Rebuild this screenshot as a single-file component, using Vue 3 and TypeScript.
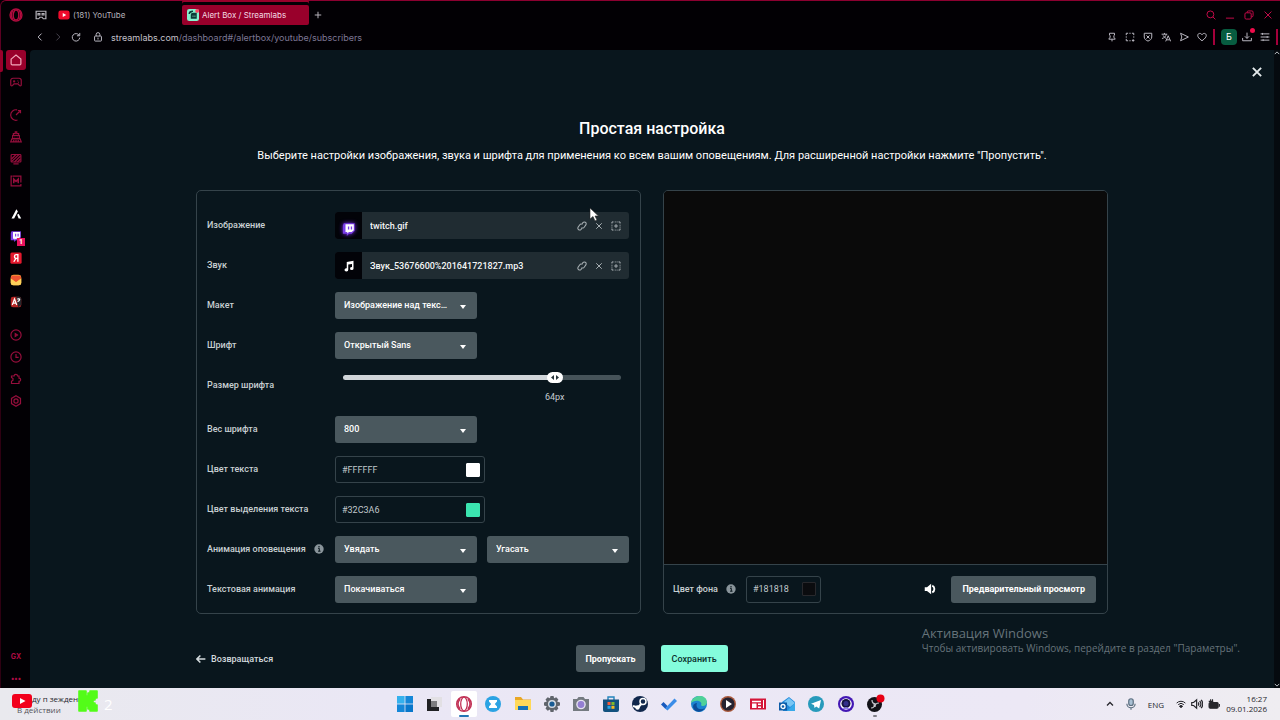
<script setup lang="ts">
import { computed, ref } from 'vue'

interface SideItem { icon: string; label: string; active?: boolean; badge?: string }
interface FileRow { id: string; label: string; name: string; icon: string }

const icons: Record<string, string> = {
  opera: '<ellipse cx="8" cy="8" rx="6.8" ry="6.8"/><ellipse cx="8" cy="8" rx="3.2" ry="5.6"/><path d="M4 3.4C2.6 6 2.6 10 4 12.6M12 3.4c1.400 2.600 1.400 6.600 0 9.200"/>',
  cards: '<path d="M1.500 3h13v10h-3.500l-1.500-2h-3L5 13H1.500z"/><path d="M4 6h2.500v2H4zM9.500 6H12v2H9.500z"/>',
  play: '<rect x="0.500" y="2" width="15" height="12" rx="3" fill="#f00b2c" stroke="none"/><path d="M6.300 5.200v5.600L11 8z" fill="#fff" stroke="none"/>',
  streamlabs: '<rect width="16" height="16" rx="3" fill="#85f3cf" stroke="none"/><path d="M3 6.500C3 4 5 3 8 3M6 8c0-1.500 1-2 2.500-2H12v6H6z" fill="#0c3b38" stroke="#0c3b38" stroke-width="2"/><circle cx="13.500" cy="2.500" r="2.500" fill="#ff4161" stroke="none"/><path d="M8 9v1M10.500 9v1" stroke="#85f3cf"/>',
  plus: '<path d="M8 1.500v13M1.500 8h13"/>',
  back: '<path d="M10.500 2.500L5 8l5.500 5.500"/>',
  forward: '<path d="M5.500 2.500L11 8l-5.500 5.500"/>',
  reload: '<path d="M13 5.200A6 6 0 1 0 14 9M14 1.500v4.500H9.500"/>',
  lock: '<rect x="2.500" y="6.500" width="11" height="8" rx="1"/><path d="M5 6.500V4a3 3 0 0 1 6 0v2.500M8 9v3"/>',
  search: '<circle cx="7" cy="7" r="5.500"/><path d="M11 11l4 4"/>',
  minimize: '<path d="M1.500 13h13"/>',
  restore: '<rect x="1.500" y="4.500" width="10" height="10" rx="2"/><path d="M5 4.500V3.500a2 2 0 0 1 2-2h5.500a2 2 0 0 1 2 2V9a2 2 0 0 1-2 2h-1"/>',
  close: '<path d="M2.500 2.500l11 11M13.500 2.500l-11 11"/>',
  pin: '<path d="M4 2h8v3l-1 1v3l2 1.500v1H3v-1L5 9V6L4 5zM8 11.500V15"/>',
  snapshot: '<path d="M2 5V2h3M7 2h2M11 2h3v3M14 7v2M2 7v2M2 11v3h3M7 14h2M11 13.500h4M13 11.500v4"/>',
  shield: '<path d="M2 2h12v6c0 3.500-3 5.500-6 6.500C5 13.500 2 11.500 2 8zM5.500 5.500l5 5M10.500 5.500l-5 5"/>',
  translate: '<path d="M1 3.500h9M5.500 1.500v2M8.500 3.500C8 7 5 9.500 1.500 10.500M3.500 5.500C4.500 8 6 9 8 10M7.500 15L11.500 6l4 9M9 12.500h5"/>',
  send: '<path d="M2.500 2L15 8 2.500 14l2-6z"/>',
  heart: '<path d="M8 14C3 10.500 1.200 8 1.200 5.500 1.200 1.800 6 1 8 4.300 10 1 14.800 1.800 14.800 5.500 14.800 8 13 10.500 8 14z"/>',
  download: '<path d="M8 1v9M4.500 6.800L8 10.300l3.500-3.500M1 9.500V14h14V9.500"/>',
  sliders: '<path d="M1 3h14M1 8h14M1 13h14M4 1.500v3M11.500 6.500v3M5 11.500v3"/>',
  home: '<path d="M1.500 6.800L8 1.500l6.500 5.300V13a1.500 1.500 0 0 1-1.500 1.500H3A1.500 1.500 0 0 1 1.500 13z"/>',
  gamepad: '<path d="M4 3h8a3 3 0 0 1 3 3v5.500c0 1.800-1.500 2-2.500 1l-1.800-2H5.300l-1.800 2c-1 1-2.500.8-2.500-1V6a3 3 0 0 1 3-3zM4 7h3M5.500 5.500v3M10 6.500h1M11 8.500h1"/>',
  gauge: '<path d="M9.500 1.200A7 7 0 1 0 10 14.700M8 8l5-5M10.500 2h3.500v3.500"/>',
  cleaner: '<path d="M4.500 6V3.500H7V1h2v2.500h2.500V6M3.500 6h9v4h-9zM2.500 10.500h11l1.500 4H1zM5 12v2M8 12v2M11 12v2M6 8h1M9 8h1"/>',
  monitor: '<rect x="1.500" y="2" width="13" height="10" rx="1"/><path d="M2 8l6-6M2 11.500L12 2M6 12l8-8M10 12l4-4M4.500 14.500h7"/>',
  mods: '<path d="M4 1.500h10.500V10M14.500 12v2.500H1.500v-13h2"/><path d="M5 11V5.500l3 3 3-3V11" stroke-width="2"/>',
  aria: '<path d="M2 14L8.500 1.500l2 3L5.500 14zM9.500 9l2-1.500L15 14h-3.500z" fill="#fff" stroke="none"/>',
  twitch: '<path d="M2 1.500h12.500v8.500l-3.500 3.500H8L5.500 16v-2.500H1V4z" fill="#7a3ee8" stroke="none"/><path d="M4 2.500h9.500v6.800L11 11.500H8L6 13v-1.500H4z" fill="#fff" stroke="none"/><path d="M7.500 5v3.500M10.800 5v3.500" stroke="#7a3ee8" stroke-width="1.500"/>',
  yandex: '<rect x="0.500" y="0.500" width="15" height="15" rx="2" fill="#e3182d" stroke="none"/><path d="M10.500 13V3.500H8.300C5.200 3.500 5.200 8.500 8.300 8.500h2.200M8 8.500L5 13" stroke="#fff" stroke-width="1.800"/>',
  mail: '<rect x="1" y="1" width="14" height="14" rx="4" fill="#ffb938" stroke="none"/><path d="M2 2h12l1 4-7 5-7-5z" fill="#ee5432" stroke="none"/><path d="M1 6l7 5 7-5v6a3 3 0 0 1-3 3H4a3 3 0 0 1-3-3z" fill="#ffd05a" stroke="none"/>',
  lingo: '<rect x="1" y="1" width="14" height="14" rx="3" fill="#b52524" stroke="none"/><path d="M8 1h4a3 3 0 0 1 3 3v8l-4 3z" fill="#28282d" stroke="none"/><path d="M3 12L6 4l3 8M4 9.500h4M9.500 4h4M11.500 3v1M13 4c0 2-1.500 3-3 3.500" stroke="#fff"/>',
  player: '<circle cx="8" cy="8" r="6.800"/><path d="M7 6v4l3-2z" fill="currentColor"/>',
  clock: '<circle cx="8" cy="8" r="6.800"/><path d="M8 4v4.500h3.500"/>',
  puzzle: '<path d="M2 4h3.500a2.300 2.300 0 0 1 4.600 0H12v2.800a2.200 2.200 0 0 1 0 4.400V14H2v-3l2-1.500v-2L2 6z"/>',
  gear: '<path d="M8 1l6 3.500v7L8 15l-6-3.500v-7z"/><circle cx="8" cy="8" r="2.800"/>',
  link: '<path d="M7 11.500l-1.500 1.500a3 3 0 0 1-4.200-4.200L5 5.200a3 3 0 0 1 4.300.3M9 4.500L10.500 3a3 3 0 0 1 4.200 4.200L11 10.800a3 3 0 0 1-4.300-.3" transform="rotate(-12 8 8)"/>',
  library: '<path d="M1.500 4V1.500H4M6 1.500h1.500M9 1.500h1.500M12 1.500h2.500V4M14.500 6v1.500M14.500 9v1.500M14.500 12v2.500H12M10.500 14.500H9M7.500 14.500H6M4 14.500H1.500V12M1.500 10.500V9M1.500 7.500V6M8 5v6M5 8h6"/>',
  music: '<path d="M5 2.500l9-1.500v10.500a2.300 2 0 1 1-2-2V5.200L7 6v7a2.500 2.200 0 1 1-2-2z" fill="#fff" stroke="none"/>',
  info: '<circle cx="8" cy="8" r="7.500" fill="currentColor" stroke="none"/><path d="M6.500 7H8.500v4.500M6.500 11.500h4" stroke="#0a171e" stroke-width="1.600"/><circle cx="8" cy="4.300" r="1.200" fill="#0a171e" stroke="none"/>',
  speaker: '<path d="M1 5.500h3L9.500 1v14L4 10.500H1z" fill="currentColor" stroke="none"/><path d="M11 3.500a5 5 0 0 1 0 9" stroke-width="2.500"/>',
  arrow: '<path d="M15 8H2M7 2.500L1.500 8 7 13.500" stroke-width="2.500"/>',
  up: '<path d="M2 11l6-6 6 6" stroke-width="2.500"/>',
  down: '<path d="M2 5l6 6 6-6" stroke-width="2.500"/>',
  mic: '<rect x="5" y="1" width="6" height="9" rx="3" fill="#a9c0d4"/><path d="M2.500 7.500a5.500 5.500 0 0 0 11 0M8 13v2.500"/>',
  wifi: '<path d="M1 6.500a10 10 0 0 1 14 0M3.500 9a6.500 6.500 0 0 1 9 0"/><path d="M5.500 11.500a3.500 3.500 0 0 1 5 0L8 14z" fill="currentColor"/>',
  volume: '<path d="M1 6h2.500L7.500 2.500v11L3.500 10H1zM9.500 6a3 3 0 0 1 0 4M11.500 4a6 6 0 0 1 0 8M13.500 2.500a8 8 0 0 1 0 11"/>',
  battery: '<rect x="1.500" y="6" width="12" height="7.500" rx="1.500" fill="currentColor"/><path d="M15.500 8v3.500M3.500 1.500v3M1 4.500h6M6 1.500v3" stroke-width="1.500"/>',
}

const taskIcons: { name: string; art: string }[] = [
  { name: 'Пуск', art: '<g fill="#1487d8"><path d="M0 0h7.600v7.600H0z" fill="#35b1ed"/><path d="M8.400 0H16v7.600H8.400z"/><path d="M0 8.400h7.600V16H0z"/><path d="M8.400 8.400H16V16H8.400z" fill="#0877cb"/></g>' },
  { name: 'Представление задач', art: '<path d="M5 1h11v10H5z" fill="#e2e0e4"/><path d="M1 3h4v8h8v4H1z" fill="#202124"/><path d="M5 5h6v6H5z" fill="#7d7d80"/>' },
  { name: 'Opera GX', art: '<g fill="none" stroke="#c23357"><circle cx="8" cy="8" r="7.300" stroke-width="1.500"/><ellipse cx="8" cy="8" rx="3.300" ry="6.800" stroke-width="1.300"/><path d="M4 3C1.500 6 1.500 10 4 13M12 3c2.500 3 2.500 7 0 10"/></g>' },
  { name: 'Zona', art: '<circle cx="8" cy="8" r="8" fill="#2ba3e3"/><path d="M4 4h8v1.500L9.800 8 12 10.500V12H4v-1.500L6.200 8 4 5.500z" fill="#fff"/>' },
  { name: 'Проводник', art: '<path d="M0 1h6l2 2.500h8V14H0z" fill="#e9a825"/><path d="M0 4h16v10H0z" fill="#ffd958"/><path d="M3 10h10v4H3z" fill="#1673b8"/>' },
  { name: 'Параметры', art: '<path d="M6.500 0h3l.6 2.200 2.100-1 2.200 2.300-1.300 2L16 6.500v3l-2.800.7 1.200 2.300-2.200 2.200-2.200-1.200L9.500 16h-3L6 13.500l-2.300 1.200-2.200-2.200 1.300-2.300L0 9.500v-3l2.800-1-1.300-2 2.200-2.300 2.200 1z" fill="#60656c"/><circle cx="8" cy="8" r="4" fill="#d6dce4"/><circle cx="8" cy="8" r="2.600" fill="#185b93"/>' },
  { name: 'Камера', art: '<path d="M0 3h4l1.500-2h5L12 3h4v12H0z" fill="#747a80"/><circle cx="8" cy="8.500" r="4.800" fill="#e5e2ef"/><circle cx="8" cy="8.500" r="3.400" fill="#947fd2"/>' },
  { name: 'Магазин', art: '<path d="M5 4V1h6v3" fill="none" stroke="#2384bc" stroke-width="1.400"/><path d="M0 3.500h16V14q0 2-2 2H2q-2 0-2-2z" fill="#12517e"/><path d="M4.500 6H7.600v3H4.500z" fill="#f15b39"/><path d="M8.400 6h3.100v3H8.400z" fill="#7db92a"/><path d="M4.500 9.800h3.100v3H4.500z" fill="#24a6e8"/><path d="M8.400 9.800h3.100v3H8.400z" fill="#f6bb20"/>' },
  { name: 'Steam', art: '<circle cx="8" cy="8" r="8" fill="#10274c"/><path d="M1 10l5 1.500L11 6" stroke="#fff" stroke-width="2.200" fill="none"/><circle cx="11" cy="5.500" r="3" fill="#10274c" stroke="#fff" stroke-width="1.500"/><circle cx="5.500" cy="11.500" r="2.200" fill="#fff"/>' },
  { name: 'To Do', art: '<path d="M0 8.500L2.500 6l4 4L4.500 13z" fill="#185abd"/><path d="M4 12.500L13.500 2.500 16 5 6.500 14.500z" fill="#3b8de8"/>' },
  { name: 'Edge', art: '<circle cx="8" cy="8" r="8" fill="#1b84d0"/><path d="M0 7C1-1 15-3 16 6c0 4-5 5-6 3 2-3-4-7-10-2z" fill="#4fd199"/><path d="M6 7c-2 5 3 8 8 5-3 5-11 5-12-1C2 8 4 7 6 7z" fill="#0b4c99"/>' },
  { name: 'Медиаплеер', art: '<circle cx="8" cy="8" r="8" fill="#a9583b"/><circle cx="8" cy="8" r="6.600" fill="#252331"/><path d="M6 4v8l6-4z" fill="#fff"/>' },
  { name: 'Новости', art: '<path d="M0 2.500h16v11H0z" fill="#d41638"/><path d="M2 4.800h9v1.500H2zM2 7.500h4.500V12H2zM8 7.500h3V9H8zM8 10.500h3V12H8zM13 4v8h1V4z" fill="#fff"/>' },
  { name: 'Outlook', art: '<path d="M3 6l7-5 6 5v9H4z" fill="#238bdc"/><path d="M5 6l5-4 6 5-5 4z" fill="#79c6f4"/><path d="M8 15l8-8v8z" fill="#38a9e9"/><path d="M0 6.500h8v8H0z" fill="#0d5ca8"/><circle cx="4" cy="10.500" r="2" stroke="#fff" stroke-width="1.300" fill="none"/>' },
  { name: 'Telegram', art: '<circle cx="8" cy="8" r="8" fill="#279abb"/><path d="M3 7.700L13 4l-1.800 8.500-3-2L6.500 12 6 9z" fill="#fff"/>' },
  { name: 'Алиса', art: '<circle cx="8" cy="8" r="8" fill="#4317b4"/><circle cx="8" cy="8" r="5.800" fill="#fff"/><circle cx="8" cy="7.500" r="4.500" fill="#171541"/><circle cx="8" cy="7.500" r="2.500" fill="#34308a"/><path d="M4.500 13q3.500-4 7 0z" fill="#8d7ce8"/>' },
  { name: 'OBS Studio', art: '<circle cx="7.500" cy="8.500" r="7.500" fill="#121217"/><g fill="none" stroke="#c7c6cd" stroke-width="1.200"><path d="M5 4q0 4 4 4M12 7q-4 0-4 4M4 12q4 0 3-4"/></g><circle cx="13.500" cy="2.500" r="4" fill="#e80014"/>' },
]

const sideGroups: SideItem[][] = [
  [{ icon: 'home', label: 'Главная', active: true }, { icon: 'gamepad', label: 'Игры' }],
  [
    { icon: 'gauge', label: 'GX Control' },
    { icon: 'cleaner', label: 'GX Cleaner' },
    { icon: 'monitor', label: 'Обои' },
    { icon: 'mods', label: 'Моды' },
  ],
  [
    { icon: 'aria', label: 'Aria' },
    { icon: 'twitch', label: 'Twitch', badge: '1' },
    { icon: 'yandex', label: 'Яндекс' },
    { icon: 'mail', label: 'Почта' },
    { icon: 'lingo', label: 'Переводчик' },
  ],
  [
    { icon: 'player', label: 'Плеер' },
    { icon: 'clock', label: 'История' },
    { icon: 'puzzle', label: 'Расширения' },
    { icon: 'gear', label: 'Настройки' },
  ],
]

const toolbar = ['pin', 'snapshot', 'shield', 'translate', 'send', 'heart']
const files: FileRow[] = [
  { id: 'image', label: 'Изображение', name: 'twitch.gif', icon: 'twitch' },
  { id: 'sound', label: 'Звук', name: 'Звук_53676600%201641721827.mp3', icon: 'music' },
]

const layout = ref('Изображение над текстом')
const font = ref('Открытый Sans')
const weight = ref('800')
const animIn = ref('Увядать')
const animOut = ref('Угасать')
const textAnim = ref('Покачиваться')
const textColor = ref('#FFFFFF')
const textSwatch = ref('#ffffff')
const accentColor = ref('#32C3A6')
const accentSwatch = ref('#3be5b0')
const backColor = ref('#181818')
const backSwatch = ref('#0b0c0f')

const minSize = 8
const maxSize = 80
const fontSize = ref(64)
const ratio = computed(() => (fontSize.value - minSize) / (maxSize - minSize))
const sliderVars = computed(() => ({ '--ratio': String(ratio.value) }))
</script>

<template>
  <div class="screen">
    <header class="browser">
      <div class="tabs">
        <button class="plain opera" aria-label="Меню Opera"><svg class="i14" viewBox="0 0 16 16" v-html="icons.opera" /></button>
        <button class="plain workspace" aria-label="Рабочее пространство"><svg class="i12" viewBox="0 0 16 16" v-html="icons.cards" /></button>
        <button class="tab"><svg class="i12" viewBox="0 0 16 16" v-html="icons.play" /><span>(181) YouTube</span></button>
        <button class="tab current"><svg class="i12" viewBox="0 0 16 16" v-html="icons.streamlabs" /><span>Alert Box / Streamlabs</span></button>
        <button class="plain newtab" aria-label="Новая вкладка"><svg class="i8" viewBox="0 0 16 16" v-html="icons.plus" /></button>
        <div class="window-buttons">
          <button v-for="n in ['search', 'minimize', 'restore', 'close']" :key="n" class="plain" :aria-label="n">
            <svg class="i10" viewBox="0 0 16 16" v-html="icons[n]" />
          </button>
        </div>
      </div>
      <nav class="address">
        <button class="plain" aria-label="Назад"><svg class="i10" viewBox="0 0 16 16" v-html="icons.back" /></button>
        <button class="plain dim" aria-label="Вперёд" disabled><svg class="i10" viewBox="0 0 16 16" v-html="icons.forward" /></button>
        <button class="plain" aria-label="Обновить"><svg class="i10" viewBox="0 0 16 16" v-html="icons.reload" /></button>
        <button class="plain lock" aria-label="Сведения о сайте"><svg class="i10" viewBox="0 0 16 16" v-html="icons.lock" /></button>
        <a class="url" href="#/alertbox/youtube/subscribers">streamlabs.com<span>/dashboard#/alertbox/youtube/subscribers</span></a>
        <div class="tools">
          <button v-for="n in toolbar" :key="n" class="plain" :aria-label="n"><svg class="i10" viewBox="0 0 16 16" v-html="icons[n]" /></button>
        </div>
        <i class="bar" />
        <button class="profile">Б</button>
        <button class="plain dl" aria-label="Загрузки"><svg class="i10" viewBox="0 0 16 16" v-html="icons.download" /></button>
        <button class="plain" aria-label="Настройки"><svg class="i10" viewBox="0 0 16 16" v-html="icons.sliders" /></button>
        <i class="bar" />
      </nav>
    </header>

    <div class="body">
      <aside class="side">
        <div v-for="(g, gi) in sideGroups" :key="gi" class="group">
          <button v-for="s in g" :key="s.icon" class="side-btn" :class="{ active: s.active }" :aria-label="s.label">
            <svg class="i12" viewBox="0 0 16 16" v-html="icons[s.icon]" />
            <b v-if="s.badge" class="badge">{{ s.badge }}</b>
          </button>
        </div>
        <div class="group end">
          <button class="side-btn gx">GX</button>
          <button class="side-btn gx" aria-label="Ещё">•••</button>
        </div>
      </aside>

      <main class="page">
        <button class="plain page-close" aria-label="Закрыть"><svg class="i12" viewBox="0 0 16 16" v-html="icons.close" /></button>
        <div class="wrap">
          <h1>Простая настройка</h1>
          <p class="lead">Выберите настройки изображения, звука и шрифта для применения ко всем вашим оповещениям. Для расширенной настройки нажмите "Пропустить".</p>

          <div class="panels">
            <form class="panel settings" @submit.prevent>
              <div v-for="f in files" :key="f.id" class="row">
                <label :for="f.id">{{ f.label }}</label>
                <div class="file">
                  <span class="thumb"><svg class="i14" :class="f.icon" viewBox="0 0 16 16" v-html="icons[f.icon]" /></span>
                  <input :id="f.id" class="file-name" type="text" readonly :value="f.name">
                  <button class="plain" aria-label="Ссылка"><svg class="i10" viewBox="0 0 16 16" v-html="icons.link" /></button>
                  <button class="plain" aria-label="Удалить"><svg class="i8" viewBox="0 0 16 16" v-html="icons.close" /></button>
                  <button class="plain" aria-label="Медиатека"><svg class="i10" viewBox="0 0 16 16" v-html="icons.library" /></button>
                </div>
              </div>
              <div class="row">
                <label for="layout">Макет</label>
                <div class="pair"><span class="select"><select id="layout" v-model="layout"><option>Изображение над текстом</option><option>Текст поверх изображения</option></select></span></div>
              </div>
              <div class="row">
                <label for="font">Шрифт</label>
                <div class="pair"><span class="select"><select id="font" v-model="font"><option>Открытый Sans</option><option>Roboto</option></select></span></div>
              </div>
              <div class="row">
                <label for="size">Размер шрифта</label>
                <div class="slider" :style="sliderVars">
                  <input id="size" v-model.number="fontSize" type="range" :min="minSize" :max="maxSize">
                  <output for="size">{{ fontSize }}px</output>
                </div>
              </div>
              <div class="row">
                <label for="weight">Вес шрифта</label>
                <div class="pair"><span class="select"><select id="weight" v-model="weight"><option>400</option><option>800</option></select></span></div>
              </div>
              <div class="row">
                <label for="tc">Цвет текста</label>
                <div class="color"><input id="tc" v-model="textColor" type="text"><input v-model="textSwatch" type="color" aria-label="Цвет текста"></div>
              </div>
              <div class="row">
                <label for="ac">Цвет выделения текста</label>
                <div class="color"><input id="ac" v-model="accentColor" type="text"><input v-model="accentSwatch" type="color" aria-label="Цвет выделения"></div>
              </div>
              <div class="row">
                <label for="ain">Анимация оповещения <svg class="i10 info" viewBox="0 0 16 16" v-html="icons.info" /></label>
                <div class="pair">
                  <span class="select"><select id="ain" v-model="animIn"><option>Увядать</option><option>Покачиваться</option></select></span>
                  <span class="select"><select v-model="animOut" aria-label="Анимация исчезновения"><option>Угасать</option><option>Увядать</option></select></span>
                </div>
              </div>
              <div class="row">
                <label for="ta">Текстовая анимация</label>
                <div class="pair"><span class="select"><select id="ta" v-model="textAnim"><option>Покачиваться</option><option>Увядать</option></select></span></div>
              </div>
            </form>

            <section class="panel preview">
              <div class="stage" />
              <div class="preview-bar">
                <label for="bg">Цвет фона <svg class="i10 info" viewBox="0 0 16 16" v-html="icons.info" /></label>
                <div class="color small"><input id="bg" v-model="backColor" type="text"><input v-model="backSwatch" type="color" aria-label="Цвет фона"></div>
                <button class="plain sound" aria-label="Звук"><svg class="i12" viewBox="0 0 16 16" v-html="icons.speaker" /></button>
                <button class="btn preview-btn">Предварительный просмотр</button>
              </div>
            </section>
          </div>

          <div class="actions">
            <button class="plain return"><svg class="i10" viewBox="0 0 16 16" v-html="icons.arrow" />Возвращаться</button>
            <div class="main-actions">
              <button class="btn">Пропускать</button>
              <button class="btn save">Сохранить</button>
            </div>
          </div>
        </div>
        <div class="watermark">
          <div class="wm-title">Активация Windows</div>
          <div class="wm-text">Чтобы активировать Windows, перейдите в раздел "Параметры".</div>
        </div>
      </main>
      <div class="scroll">
        <svg class="i6" viewBox="0 0 16 16" v-html="icons.up" />
        <svg class="i6" viewBox="0 0 16 16" v-html="icons.down" />
      </div>
    </div>

    <footer class="taskbar">
      <div class="widget">
        <svg class="yt" viewBox="0 0 20 16"><rect y="1" width="20" height="14" rx="3" fill="#f2001c" /><path d="M8 5v6l5.500-3z" fill="#fff" /></svg>
        <div class="widget-text"><span>ду п зеждени</span><span>В действии</span></div>
        <svg class="kick" viewBox="0 0 20 22"><path d="M1 1h7v5h2V3h2V1h7v7h-2v2h-2v3h2v2h2v6h-7v-2h-2v-3H8v5H1z" fill="#53fc18" stroke="#53fc18" stroke-linejoin="round" /></svg>
        <span class="count">2</span>
      </div>
      <div class="apps">
        <button v-for="(t, i) in taskIcons" :key="t.name" class="app" :class="{ open: i === 2, running: i === 16 }" :aria-label="t.name">
          <svg viewBox="0 0 16 16" v-html="t.art" />
        </button>
      </div>
      <div class="tray">
        <svg class="i8" viewBox="0 0 16 16" v-html="icons.up" />
        <svg class="i12 mic" viewBox="0 0 16 16" v-html="icons.mic" />
        <span class="lang">ENG</span>
        <svg class="i10" viewBox="0 0 16 16" v-html="icons.wifi" />
        <svg class="i12" viewBox="0 0 16 16" v-html="icons.volume" />
        <svg class="i12" viewBox="0 0 16 16" v-html="icons.battery" />
        <div class="clock"><span>16:27</span><span>09.01.2026</span></div>
      </div>
    </footer>

    <svg class="cursor" viewBox="0 0 10 15"><path d="M1 1v11l3-2.500L6 14l2-1-2-4h3.500z" fill="#fff" stroke="#222" stroke-width="0.600" /></svg>
  </div>
</template>

<style>
html, body { margin: 0; background: #000; }
</style>

<style scoped>
* { box-sizing: border-box; }
.screen {
  position: relative; display: flex; flex-direction: column; min-height: 100vh;
  background: #020004; color: #c3cbce; font-family: Roboto, "Liberation Sans", sans-serif; font-size: 9px; overflow: hidden;
}
button, input, select { font: inherit; color: inherit; }
svg { display: block; flex: none; fill: none; stroke: currentColor; stroke-width: 1.6; }
.i6 { width: 6px; height: 6px; }
.i8 { width: 8px; height: 8px; stroke-width: 2; }
.i10 { width: 10px; height: 10px; }
.i12 { width: 12px; height: 12px; }
.i14 { width: 14px; height: 14px; }
.plain { display: flex; align-items: center; justify-content: center; padding: 0; border: 0; background: none; }

.browser { height: 50px; border-top: 1px solid #8b0030; border-left: 1px solid #5c0022; border-top-left-radius: 6px; font-family: Inter, "Liberation Sans", sans-serif; font-size: 8px; }
.tabs { display: flex; align-items: center; height: 27px; padding: 0 7px 0 8px; }
.opera { color: #b30c3f; margin-right: 12px; }
.workspace { color: #b6b2ba; margin-right: 11px; }
.tab { display: flex; align-items: center; gap: 3px; width: 124px; height: 20px; padding: 0; border: 0; background: none; color: #b5b2bb; text-align: left; white-space: nowrap; }
.tab.current { width: 127px; padding-left: 5px; background: #99002b; color: #f3dbe3; border-radius: 2px; box-shadow: 0 -3px 0 #020004, 0 -5px 0 #99002b; }
.newtab { color: #b6b2ba; margin-left: 5px; }
.window-buttons { display: flex; gap: 9px; margin-left: auto; color: #c20a48; }
.address { display: flex; align-items: center; gap: 8px; height: 18px; padding: 0 4px 0 34px; color: #b9b6c0; }
.dim { color: #45414c; }
.lock { margin-left: 4px; }
.url { flex: 1; color: #c4c0ca; font-size: 9px; text-decoration: none; white-space: nowrap; }
.url span { color: #7d7794; }
.tools { display: flex; gap: 8px; }
.bar { width: 2px; height: 16px; background: #a5003b; margin: 0 -2px; }
.profile { width: 16px; height: 16px; padding: 0; border: 0; border-radius: 4px; background: #075c40; color: #fff; font-size: 9px; line-height: 16px; margin-right: -3px; }
.dl { position: relative; }
.dl::after { content: ""; position: absolute; right: -3px; top: -4px; width: 5px; height: 5px; border-radius: 50%; background: #ef0b4b; }

.body { display: flex; flex: 1; }
.side { position: relative; display: flex; flex-direction: column; width: 30px; border-left: 1px solid #2e0012; padding-left: 5px; background: #020004; }
.side::before { content: ""; position: absolute; left: -1px; top: 0; width: 3px; height: 22px; border-radius: 0 2px 2px 0; background: #99002b; }
.group { display: flex; flex-direction: column; gap: 2px; margin-bottom: 13px; }
.group.end { margin: auto 0 0; }
.side-btn { position: relative; display: flex; align-items: center; justify-content: center; width: 20px; height: 20px; padding: 0; border: 0; border-radius: 3px; background: none; color: #960e3c; }
.side-btn.active { background: #99002b; color: #f3a9bd; }
.side-btn.gx { font: 700 7px Inter, "Liberation Sans", sans-serif; color: #b00c44; }
.badge { position: absolute; right: 1px; bottom: 0; width: 8px; height: 8px; background: #e8125e; color: #fff; font-size: 7px; line-height: 8px; text-align: center; }

.page { position: relative; flex: 1; min-width: 0; padding: 16px 11px 0; background: #09161d; border-top-left-radius: 4px; }
.page-close { width: 12px; height: 12px; margin-left: auto; color: #e4eaec; }
.page-close svg { stroke-width: 2.5; }
.wrap { max-width: 912px; margin: 40px auto 0; }
h1 { margin: 0; color: #fff; font-size: 16px; font-weight: 500; line-height: 22px; text-align: center; }
.lead { margin: 8px 0 0; color: #fff; font-size: 11px; line-height: 16px; text-align: center; font-weight: 400; }
.panels { display: grid; grid-template-columns: 1fr 1fr; gap: 22px; margin-top: 26px; }
.panel { border: 1px solid #35434a; border-radius: 5px; overflow: hidden; }
.settings { display: flex; flex-direction: column; gap: 13px; padding: 21px 11px 10px 10px; }
.row { display: grid; grid-template-columns: 128px 1fr; }
label { display: flex; align-items: center; gap: 8px; height: 26px; color: #c8d0d3; font-weight: 500; white-space: nowrap; }
.info { color: #89949a; }
.file { display: flex; align-items: center; gap: 8px; height: 27px; padding-right: 8px; background: #202c32; border-radius: 3px; color: #a6aeb2; overflow: hidden; }
.thumb { display: flex; align-items: center; justify-content: center; width: 27px; height: 27px; background: #020308; }
.thumb .twitch { margin-top: 6px; filter: drop-shadow(0 0 2px #7a2cf0); }
.i14.music { width: 12px; height: 12px; }
.file-name { flex: 1; min-width: 0; padding: 0; border: 0; background: none; outline: 0; color: #f4f6f7; font-weight: 500; }
.pair { display: grid; grid-template-columns: 1fr 1fr; gap: 10px; }
.select { position: relative; display: flex; min-width: 0; }
.select::after { content: ""; position: absolute; right: 11px; top: 13px; border: 3px solid transparent; border-top: 4px solid #fff; border-bottom: 0; }
select { width: 100%; height: 27px; padding: 0 26px 2px 9px; border: 0; border-radius: 3px; background: #4a585e; color: #fff; font-weight: 500; appearance: none; text-overflow: ellipsis; white-space: nowrap; overflow: hidden; }
.slider { position: relative; height: 31px; padding: 0 8px; }
.slider input { display: block; width: 100%; height: 11px; margin: 0; appearance: none; background: none; }
.slider input::-webkit-slider-runnable-track { height: 5px; border-radius: 3px; background: linear-gradient(to right, #d0d5d9 calc(var(--ratio) * 100%), #465359 0); }
.slider input::-webkit-slider-thumb {
  appearance: none; width: 16px; height: 11px; margin-top: -3px; border: 0; border-radius: 6px;
  background: #fff url("data:image/svg+xml,%3Csvg xmlns='http://www.w3.org/2000/svg' viewBox='0 0 16 11'%3E%3Cpath d='M7 3v5L4 5.500zM9 3v5l3-2.500z' fill='%2326343a'/%3E%3C/svg%3E") center / 100% no-repeat;
}
output { position: absolute; top: 18px; left: calc(16px + (100% - 32px) * var(--ratio)); transform: translateX(-50%); line-height: 14px; color: #c4ccd0; }
.color { display: flex; align-items: center; width: 150px; height: 27px; padding: 0 4px 0 6px; border: 1px solid #35434a; border-radius: 3px; }
.color.small { width: 75px; }
.color input[type="text"] { flex: 1; min-width: 0; padding: 0; border: 0; background: none; outline: 0; color: #c0c8cc; }
input[type="color"] { width: 14px; height: 14px; padding: 0; border: 0; border-radius: 1px; background: none; appearance: none; }
.small input[type="color"] { border: 1px solid #28282c; }
input[type="color"]::-webkit-color-swatch-wrapper { padding: 0; }
input[type="color"]::-webkit-color-swatch { border: 0; border-radius: 1px; }
.preview { display: flex; flex-direction: column; }
.stage { flex: 1; background: #0a0a0a; }
.preview-bar { display: flex; align-items: center; height: 49px; padding: 0 11px 0 9px; border-top: 1px solid #35434a; }
.preview-bar .color { margin-left: 10px; }
.sound { margin: 0 15px 0 auto; color: #fff; }
.btn { height: 27px; padding: 0 9px; border: 0; border-radius: 3px; background: #4a585e; color: #fff; font-weight: 700; white-space: nowrap; }
.preview-btn { padding: 0 11px; }
.save { padding: 0 11px; background: #84fcdc; color: #0b2f2c; font-weight: 500; }
.actions { display: grid; grid-template-columns: 1fr auto 1fr; align-items: center; margin-top: 31px; }
.return { gap: 5px; justify-self: start; color: #d3dadd; font-weight: 500; }
.main-actions { display: flex; gap: 16px; }
.watermark { position: absolute; right: 34px; bottom: 33px; color: #66737a; font-family: "Open Sans", "Noto Sans", sans-serif; white-space: nowrap; pointer-events: none; }
.wm-title { font-size: 13px; line-height: 16px; }
.wm-text { font-size: 10px; line-height: 14px; }
.scroll { display: flex; flex-direction: column; justify-content: space-between; align-items: center; width: 6px; background: #050a0f; color: #c3cbce; }

.taskbar { display: grid; grid-template-columns: 1fr 486px 1fr; align-items: center; height: 32px; background: linear-gradient(to right, #e9e9ee, #eae7f5 30%, #ece8f5 80%, #efedf1); color: #26262b; font-family: "Open Sans", "Noto Sans", sans-serif; font-size: 8px; }
.widget { display: flex; align-items: center; padding-left: 12px; }
.yt { width: 20px; height: 16px; stroke: none; margin-bottom: 6px; }
.widget-text { display: flex; flex-direction: column; width: 46px; line-height: 11px; white-space: nowrap; }
.widget-text span:last-child { margin-left: -15px; color: #55555b; }
.kick { width: 20px; height: 22px; margin: 0 6px 6px 0; }
.count { color: #fff; font-size: 15px; line-height: 20px; }
.apps { display: flex; justify-content: space-between; }
.app { position: relative; width: 16px; height: 16px; padding: 0; border: 0; background: none; }
.app svg { position: relative; width: 16px; height: 16px; stroke: none; overflow: visible; }
.app.open::before { content: ""; position: absolute; inset: -5px; border-radius: 2px; background: #fff; }
.app.open::after, .app.running::after { content: ""; position: absolute; left: 3px; bottom: -5px; width: 10px; height: 2px; border-radius: 1px; background: #2374b5; }
.app.running::after { left: 6px; width: 4px; background: #808088; }
.tray { display: flex; align-items: center; justify-content: flex-end; gap: 5px; padding-right: 13px; }
.mic { margin: 0 6px 0 6px; color: #5c6f80; }
.lang { margin-right: 7px; }
.clock { display: flex; flex-direction: column; width: 42px; line-height: 10px; text-align: right; }
.cursor { position: absolute; left: 589px; top: 207px; width: 10px; height: 15px; pointer-events: none; }
</style>
